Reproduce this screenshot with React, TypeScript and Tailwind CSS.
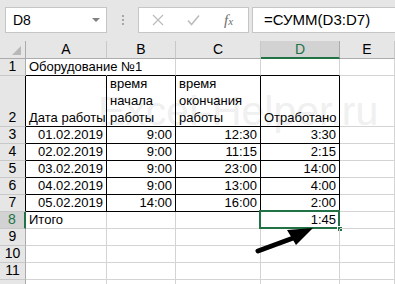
import React from 'react'

type Cell = { text?: string; lines?: string[]; right?: boolean; nowrap?: boolean }

const widths = [81, 69, 85, 79, 55]
const letters = ['A', 'B', 'C', 'D', 'E']

const rows: { n: number; h: number; cells: Cell[] }[] = [
  { n: 1, h: 17, cells: [{ text: 'Оборудование №1', nowrap: true }, {}, {}, {}, {}] },
  {
    n: 2,
    h: 51,
    cells: [
      { text: 'Дата работы' },
      { lines: ['время', 'начала', 'работы'] },
      { lines: ['время', 'окончания', 'работы'] },
      { text: 'Отработано' },
      {},
    ],
  },
  { n: 3, h: 17, cells: [{ text: '01.02.2019', right: true }, { text: '9:00', right: true }, { text: '12:30', right: true }, { text: '3:30', right: true }, {}] },
  { n: 4, h: 17, cells: [{ text: '02.02.2019', right: true }, { text: '9:00', right: true }, { text: '11:15', right: true }, { text: '2:15', right: true }, {}] },
  { n: 5, h: 17, cells: [{ text: '03.02.2019', right: true }, { text: '9:00', right: true }, { text: '23:00', right: true }, { text: '14:00', right: true }, {}] },
  { n: 6, h: 17, cells: [{ text: '04.02.2019', right: true }, { text: '9:00', right: true }, { text: '13:00', right: true }, { text: '4:00', right: true }, {}] },
  { n: 7, h: 17, cells: [{ text: '05.02.2019', right: true }, { text: '14:00', right: true }, { text: '16:00', right: true }, { text: '2:00', right: true }, {}] },
  { n: 8, h: 17, cells: [{ text: 'Итого' }, {}, {}, { text: '1:45', right: true }, {}] },
  { n: 9, h: 17, cells: [{}, {}, {}, {}, {}] },
  { n: 10, h: 17, cells: [{}, {}, {}, {}, {}] },
  { n: 11, h: 17, cells: [{}, {}, {}, {}, {}] },
  { n: 12, h: 17, cells: [{}, {}, {}, {}, {}] },
]

function FormulaBar() {
  return (
    <div className="h-[41px] bg-[#e6e6e6] flex items-start pt-[7px] pl-[5px]">
      <div className="w-[102px] h-[26px] bg-white border border-[#c6c6c6] flex items-center justify-between pl-[7px] pr-[6px] text-[14px] text-black">
        <span>D8</span>
        <span className="w-0 h-0 border-l-[4px] border-r-[4px] border-t-[4px] border-l-transparent border-r-transparent border-t-[#808080]" />
      </div>
      <div className="w-[31px] h-[26px] flex flex-col items-center justify-center gap-[2px]">
        <span className="w-[2px] h-[2px] bg-[#a6a6a6]" />
        <span className="w-[2px] h-[2px] bg-[#a6a6a6]" />
        <span className="w-[2px] h-[2px] bg-[#a6a6a6]" />
      </div>
      <div className="w-[111px] h-[26px] bg-white border border-[#c6c6c6] flex items-center pl-[13px]">
        <svg width="12" height="12" viewBox="0 0 12 12" className="mr-[23px]">
          <path d="M1 1 L11 11 M11 1 L1 11" stroke="#bdbdbd" strokeWidth="1.3" fill="none" />
        </svg>
        <svg width="13" height="12" viewBox="0 0 13 12" className="mr-[24px]">
          <path d="M1 6.5 L4.5 10.5 L12 1.5" stroke="#bdbdbd" strokeWidth="1.6" fill="none" />
        </svg>
        <span className="font-['Liberation_Serif'] italic text-[15px] text-[#6e6e6e] leading-none">
          f<span className="text-[11px]">x</span>
        </span>
      </div>
      <div className="ml-[3px] flex-1 h-[26px] bg-white border border-[#c6c6c6] border-r-0 flex items-center pl-[11px] text-[15px] text-black">
        =СУММ(D3:D7)
      </div>
    </div>
  )
}

function ColumnHeaders() {
  return (
    <div className="flex h-[18px]">
      <div className="w-[26px] shrink-0 bg-[#e6e6e6] border-r border-b border-[#ababab] flex items-end justify-end pr-[4px] pb-[3px]">
        <svg width="9" height="9" viewBox="0 0 9 9">
          <polygon points="9,0 9,9 0,9" fill="#b8b8b8" />
        </svg>
      </div>
      {letters.map((l, i) =>
        l === 'D' ? (
          <div
            key={l}
            style={{ width: widths[i] }}
            className="shrink-0 bg-[#d2d2d2] border-r border-[#ababab] border-b-2 border-b-[#217346] flex items-center justify-center text-[14px] text-[#217346]"
          >
            {l}
          </div>
        ) : (
          <div
            key={l}
            style={{ width: widths[i] }}
            className="shrink-0 bg-[#e6e6e6] border-r border-[#c8c8c8] border-b border-b-[#ababab] flex items-center justify-center text-[14px] text-black"
          >
            {l}
          </div>
        )
      )}
    </div>
  )
}

function SheetRow({ n, h, cells }: { n: number; h: number; cells: Cell[] }) {
  const selected = n === 8
  return (
    <div className="flex" style={{ height: h }}>
      <div
        className={
          selected
            ? 'w-[26px] shrink-0 bg-[#d2d2d2] border-r-2 border-r-[#217346] border-b border-b-[#c8c8c8] flex items-end justify-center text-[14px] leading-[17px] text-[#217346]'
            : n >= 2 && n <= 7
            ? 'w-[26px] shrink-0 bg-[#e6e6e6] border-r border-r-black border-b border-b-[#c8c8c8] flex items-end justify-center text-[14px] leading-[17px] text-black'
            : 'w-[26px] shrink-0 bg-[#e6e6e6] border-r border-r-[#ababab] border-b border-b-[#c8c8c8] flex items-end justify-center text-[14px] leading-[17px] text-black'
        }
      >
        {n < 12 ? n : ''}
      </div>
      {cells.map((c, i) => {
        const inTable = i <= 3
        const bottomBlack = inTable && n <= 7
        const rightBlack = inTable && n >= 2 && n <= 7
        const rightNone = n === 1 && i === 0
        const isD8 = selected && i === 3
        return (
          <div
            key={i}
            style={{ width: widths[i] }}
            className={[
              'shrink-0 relative flex flex-col justify-end text-[13px] leading-[17px] text-black border-r border-b',
              bottomBlack ? 'border-b-black' : 'border-b-[#d4d4d4]',
              rightNone ? 'border-r-transparent' : rightBlack ? 'border-r-black' : 'border-r-[#d4d4d4]',
              c.right ? 'items-end pr-[3px]' : 'items-start pl-[3px]',
              c.nowrap ? 'whitespace-nowrap overflow-visible z-10' : '',
            ].join(' ')}
          >
            {c.lines ? c.lines.map((l) => <span key={l}>{l}</span>) : c.text && <span>{c.text}</span>}
            {isD8 && (
              <>
                <span className="absolute -left-[2px] -top-[2px] -right-[1px] -bottom-[1px] border-2 border-[#217346]" />
                <span className="absolute -right-[4px] -bottom-[4px] w-[6px] h-[6px] bg-[#217346] border border-white" />
              </>
            )}
          </div>
        )
      })}
    </div>
  )
}

export default function App() {
  return (
    <div className="relative isolate w-[395px] h-[284px] overflow-hidden bg-white font-['Liberation_Sans',Arial,sans-serif]">
      <FormulaBar />
      <ColumnHeaders />
      {rows.map((r) => (
        <SheetRow key={r.n} {...r} />
      ))}

      <div className="absolute left-[98px] top-[91px] -z-10 text-[41px] leading-none text-[#f0f0f0] whitespace-nowrap select-none pointer-events-none">
        Excel-Helper.ru
      </div>

      <svg className="absolute left-0 top-0 pointer-events-none" width="395" height="284" viewBox="0 0 395 284">
        <path d="M258 251 L296 237" stroke="black" strokeWidth="5" strokeLinecap="round" />
        <polygon points="287,230 313,228 296,245" fill="black" />
      </svg>
    </div>
  )
}
